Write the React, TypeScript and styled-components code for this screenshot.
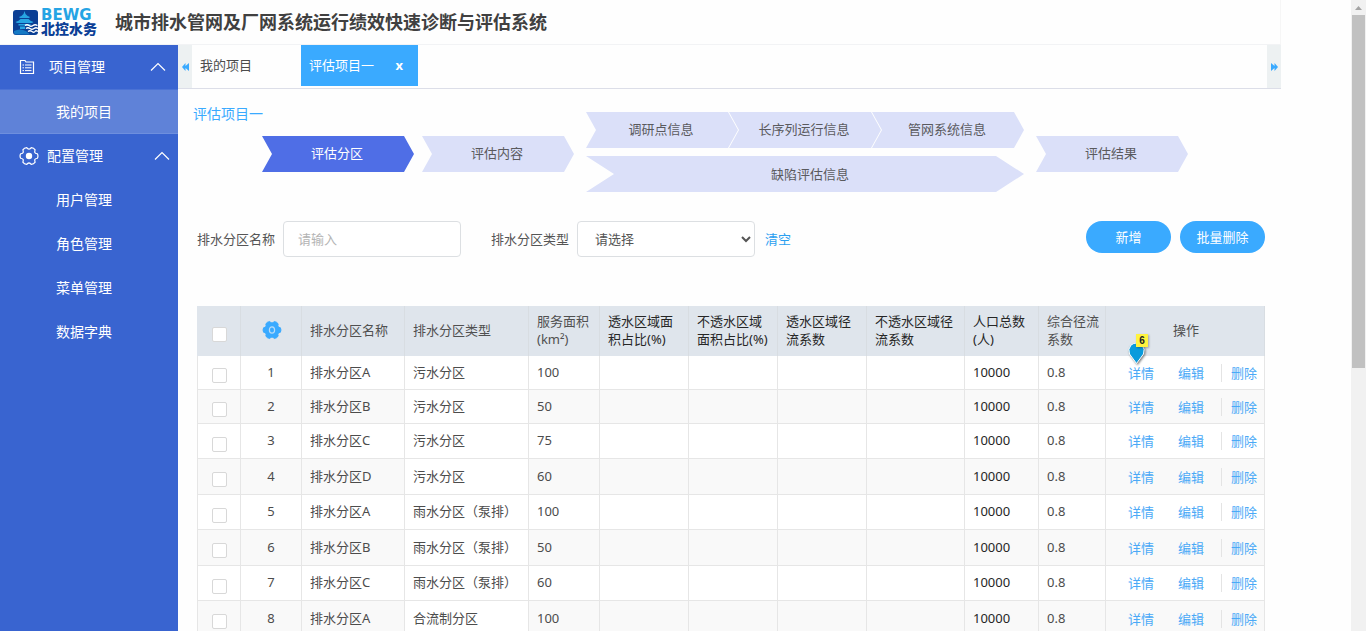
import React from "react";
import styled, { createGlobalStyle, css } from "styled-components";

const BLUE = "#3aaaff";
const FONT = `"Noto Sans", "Noto Sans CJK SC", sans-serif`;

const GlobalStyle = createGlobalStyle`
  *, *::before, *::after { box-sizing: border-box; }
  body {
    margin: 0;
    background: #fefefe;
    color: #4c4c4c;
    font: 13px/18px ${FONT};
    overflow: hidden;
  }
  button, input, select { font: inherit; color: inherit; }
  button { border: 0; padding: 0; background: none; cursor: pointer; }
  a { text-decoration: none; color: inherit; }
`;

const Page = styled.div`
  display: flex;
  height: 100vh;
`;

const Shell = styled.div`
  flex: 1;
  min-width: 0;
  display: flex;
  flex-direction: column;
  margin-right: 70px;
`;

const Header = styled.header`
  display: flex;
  align-items: center;
  flex: none;
  height: 45px;
  padding-left: 12px;
  border-bottom: 1px solid #f2f3f5;
  border-right: 1px solid #f6f6f6;
`;

const Logo = styled.div`
  display: flex;
  align-items: center;
  gap: 3px;
  width: 103px;
`;

const LogoText = styled.div`
  display: flex;
  flex-direction: column;
`;

const LogoLatin = styled.span`
  font: 700 15px/13px "DejaVu Sans", sans-serif;
  color: #25a4e4;
`;

const LogoHan = styled.span`
  font-size: 14px;
  line-height: 13px;
  font-weight: 900;
  color: #0c3f96;
`;

const Title = styled.h1`
  margin: 0;
  font-size: 18px;
  line-height: 24px;
  font-weight: 700;
  color: #404040;
`;

const Body = styled.div`
  flex: 1;
  min-height: 0;
  display: flex;
`;

const Sidebar = styled.nav`
  flex: none;
  width: 178px;
  background: #3964d0;
  color: #fff;
  font-size: 14px;
`;

const SectionButton = styled.button<{ $gap: number; $end: number }>`
  display: flex;
  align-items: center;
  gap: ${(p) => p.$gap}px;
  width: 100%;
  height: 44px;
  padding: 0 ${(p) => p.$end}px 0 19px;
  svg:last-child { margin-left: auto; }
`;

const SideLink = styled.a<{ $active?: boolean }>`
  display: flex;
  align-items: center;
  height: 44px;
  padding-left: 56px;
  ${(p) =>
    p.$active &&
    css`
      height: 45px;
      background: #5f82d8;
      border-top: 1px solid #4a72d5;
      border-bottom: 1px solid #6e8fde;
    `}
`;

const Main = styled.main`
  flex: 1;
  min-width: 0;
  display: flex;
  flex-direction: column;
`;

const TabBar = styled.div`
  display: flex;
  flex: none;
  height: 44px;
  border-bottom: 1px solid #dcdee8;
`;

const TabScroll = styled.button`
  width: 14px;
  background: #edf1f2;
  display: flex;
  align-items: center;
  justify-content: center;
`;

const TabList = styled.div`
  flex: 1;
  display: flex;
  align-items: flex-start;
`;

const Tab = styled.div<{ $active?: boolean }>`
  display: flex;
  align-items: center;
  justify-content: space-between;
  width: ${(p) => (p.$active ? 117 : 109)}px;
  height: 41px;
  padding: 0 15px 1px 8px;
  ${(p) => p.$active && css`background: ${BLUE}; color: #fff;`}
`;

const CloseTab = styled.button`
  font-weight: 700;
  line-height: 16px;
`;

const Content = styled.div`
  flex: 1;
  min-height: 0;
  overflow: hidden;
  padding: 16px 16px 0 19px;
`;

const Flow = styled.section`
  display: grid;
  grid-template-columns: 65px auto auto auto auto 1fr;
  height: 88px;
`;

const ProjectName = styled.h2`
  margin: 0 0 0 -4px;
  font-size: 14px;
  line-height: 18px;
  font-weight: 400;
  color: ${BLUE};
  white-space: nowrap;
`;

const Step = styled.a<{ $active?: boolean; $wide?: boolean }>`
  display: flex;
  align-items: center;
  justify-content: center;
  width: ${(p) => (p.$wide ? "100%" : "152px")};
  height: 36px;
  padding: ${(p) => (p.$wide ? "0 0 0 10px" : "0 2px 2px 0")};
  --tip: ${(p) => (p.$wide ? 28 : 10)}px;
  clip-path: polygon(
    0 0, calc(100% - var(--tip)) 0, 100% 50%,
    calc(100% - var(--tip)) 100%, 0 100%, var(--tip) 50%
  );
  background: ${(p) => (p.$active ? "#4f6ee6" : "#dbe0f9")};
  color: ${(p) => (p.$active ? "#fff" : "#5a5a5e")};
`;

const StepSlot = styled.div`
  padding-top: 31px;
  margin-right: 8px;
`;

const StepStack = styled.div`
  display: grid;
  align-content: start;
  gap: 8px;
  margin: 7px 12px 0 4px;
`;

const StepRow = styled.div`
  display: flex;
  ${Step} + ${Step} { margin-left: -9px; }
`;

const Filters = styled.form`
  display: flex;
  align-items: flex-start;
  margin-top: 28px;
`;

const Field = styled.label`
  display: flex;
  align-items: center;
  gap: 8px;
  margin-right: 30px;
  color: #555;
`;

const control = css`
  width: 178px;
  height: 36px;
  border: 1px solid #dcdfe2;
  border-radius: 4px;
  background: #fff;
`;

const TextInput = styled.input`
  ${control}
  padding: 0 14px;
  &::placeholder { color: #b4b4b4; opacity: 1; }
`;

const SelectBox = styled.select`
  ${control}
  padding: 0 0 0 13px;
`;

const ClearLink = styled.button`
  height: 36px;
  margin-left: -20px;
  color: #2ba0f0;
`;

const Buttons = styled.div`
  display: flex;
  gap: 9px;
  margin-left: auto;
`;

const PillButton = styled.button`
  width: 85px;
  height: 32px;
  border-radius: 16px;
  background: ${BLUE};
  color: #fff;
`;

const Table = styled.table`
  width: 100%;
  margin-top: 49px;
  table-layout: fixed;
  border-spacing: 0;
`;

const Row = styled.tr`
  height: 36px;
  background: #fff;
  &:nth-child(odd) { height: 35px; }
  &:nth-child(-n + 2) { height: 34px; }
  &:nth-child(even) { background: #f9f9f9; }
`;

const HeadCell = styled.th<{ $dark?: boolean; $center?: boolean }>`
  height: 50px;
  padding: 0 6px 2px 8px;
  background: #dfe5ec;
  border-right: 1px solid #d8dde2;
  font-weight: 400;
  text-align: ${(p) => (p.$center ? "center" : "left")};
  color: ${(p) => (p.$dark ? "#262626" : "#505050")};
  svg { display: block; margin: 0 auto; }
`;

const Cell = styled.td<{ $dark?: boolean; $center?: boolean; $plain?: boolean }>`
  padding: 0 0 2px 8px;
  border-right: 1px solid #e6e6e6;
  border-bottom: 1px solid #e6e6e6;
  text-align: ${(p) => (p.$center ? "center" : "left")};
  ${(p) => p.$center && css`padding-left: 0;`}
  ${(p) => p.$dark && css`color: #262626;`}
  ${(p) => p.$plain && css`background: #fff;`}
  &:first-child { border-left: 1px solid #e6e6e6; }
`;

const Check = styled.input.attrs({ type: "checkbox" })`
  appearance: none;
  display: block;
  width: 15px;
  height: 15px;
  margin: 8px auto 0;
  border: 1px solid #d8d8d8;
  border-radius: 2px;
  background: #fff;
  &:checked { background: ${BLUE}; }
`;

const Actions = styled.div`
  display: flex;
  align-items: center;
  padding: 2px 0 0 14px;
  color: #4aa9f7;
`;

const ActionLink = styled.a`
  position: relative;
  margin-right: 24px;
  & + & { margin-right: 17px; }
`;

const DeleteLink = styled.a`
  padding-left: 9px;
  border-left: 1px solid #e4e4e4;
`;

const Marker = styled.span`
  position: absolute;
  left: 0;
  bottom: 18px;
  width: 20px;
  height: 30px;
  svg { position: absolute; left: 0; bottom: 0; overflow: visible; }
`;

const MarkerCount = styled.b`
  position: absolute;
  left: 8px;
  top: 0;
  width: 12px;
  background: #fff33f;
  color: #222;
  font: 700 10px/13px "Liberation Sans", sans-serif;
  text-align: center;
  box-shadow: 1px 1px 2px rgba(0, 0, 0, 0.3);
`;

const MarkerPin = styled.path`
  fill: #0a9bdc;
  stroke: #fff;
  filter: drop-shadow(1px 1px 1px #777);
`;

const ScrollTrack = styled.div`
  flex: none;
  width: 15px;
  background: #f1f1f1;
  display: flex;
  flex-direction: column;
  align-items: center;
`;

const ScrollThumb = styled.div`
  width: 13px;
  height: 56%;
  flex: none;
  background: #c1c1c1;
  margin-top: 5px;
`;

const Chevron = () => (
  <svg width="16" height="10" viewBox="0 0 16 10" fill="none" stroke="#fff" strokeWidth="1.2">
    <path d="M1 8.500 8 1.500l7 7" />
  </svg>
);

const Arrows = ({ flip }: { flip?: boolean }) => (
  <svg width="7" height="8" viewBox="0 0 7 8" fill={BLUE}>
    <path d={flip ? "M0 0 3.500 3V0L7 4 3.500 8V5L0 8Z" : "M7 0 3.500 3V0L0 4l3.500 4V5L7 8Z"} />
  </svg>
);

/* Outline of a six-lobed gear centred on (c, c). */
function gearPath(c: number, outer: number, inner: number) {
  const at = (r: number, deg: number) => {
    const a = (deg * Math.PI) / 180;
    return `${(c + r * Math.cos(a)).toFixed(2)} ${(c + r * Math.sin(a)).toFixed(2)}`;
  };
  let d = `M${at(inner, -30)}`;
  for (let k = 0; k < 360; k += 60) {
    d += `Q${at(inner + 0.4, k - 20)} ${at(outer - 0.3, k - 15)}`;
    d += `Q${at(outer + 0.5, k)} ${at(outer - 0.3, k + 15)}`;
    d += `Q${at(inner + 0.4, k + 20)} ${at(inner, k + 30)}`;
  }
  return d + "Z";
}

const columns: { width: number; label: string[]; dark?: boolean }[] = [
  { width: 103, label: ["排水分区名称"] },
  { width: 124, label: ["排水分区类型"] },
  { width: 71, label: ["服务面积", "(km²)"] },
  { width: 89, label: ["透水区域面", "积占比(%)"], dark: true },
  { width: 89, label: ["不透水区域", "面积占比(%)"], dark: true },
  { width: 89, label: ["透水区域径", "流系数"], dark: true },
  { width: 98, label: ["不透水区域径", "流系数"], dark: true },
  { width: 74, label: ["人口总数", "(人)"], dark: true },
  { width: 67, label: ["综合径流", "系数"] },
];

const rows: [string, string, number][] = [
  ["排水分区A", "污水分区", 100],
  ["排水分区B", "污水分区", 50],
  ["排水分区C", "污水分区", 75],
  ["排水分区D", "污水分区", 60],
  ["排水分区A", "雨水分区（泵排）", 100],
  ["排水分区B", "雨水分区（泵排）", 50],
  ["排水分区C", "雨水分区（泵排）", 60],
  ["排水分区A", "合流制分区", 100],
];

export default function App() {
  return (
    <Page>
      <GlobalStyle />
      <Shell>
        <Header>
          <Logo>
            <svg width="26" height="26" viewBox="0 0 26 26">
              <rect x="1" y="1" width="25" height="25" rx="3" fill="#0b3f94" />
              <path d="M12.500 2 13.500 5q2 2.500 4.500 3l-1 1H8L7 8q2.500-.5 4.500-3ZM8.500 10h8q1.500 2 5 3l-1.500 1H5l-1.500-1q3.500-1 5-3ZM6.500 15h12v1.500h-12ZM8 17.500h5V20H8Z" fill="#27a5e2" />
              <path d="M2 22q6-3 12 0l4 3.500H3Q1.500 25 2 22Z" fill="#1579c4" />
              <path d="M13 16.500q2-1.500 4 0t4 0 4.500 0M14 19.500q2-1.500 4 0t4 0 4 0M16 22.500q2-1.500 4 0t3 0 3 0" fill="none" stroke="#fff" strokeWidth="1.300" />
            </svg>
            <LogoText>
              <LogoLatin>BEWG</LogoLatin>
              <LogoHan>北控水务</LogoHan>
            </LogoText>
          </Logo>
          <Title>城市排水管网及厂网系统运行绩效快速诊断与评估系统</Title>
        </Header>
        <Body>
          <Sidebar>
            <SectionButton $gap={14} $end={12}>
              <svg width="16" height="16" viewBox="0 0 16 16" fill="none" stroke="#fff" strokeWidth="1.2">
                <path d="M1.500 14.500V1.500h4.500l1 1.500h7.500v11.500Z" />
                <path d="M3.500 6h1.500M6 6h6.500M3.500 8.800h1.500M6 8.800h6.500M3.500 11.600h1.500M6 11.600h6.500" strokeWidth="1" />
              </svg>
              项目管理
              <Chevron />
            </SectionButton>
            <SideLink href="#projects" $active>我的项目</SideLink>
            <SectionButton $gap={8} $end={8}>
              <svg width="20" height="20" viewBox="0 0 20 20">
                <path d={gearPath(10, 9, 6.8)} fill="none" stroke="#fff" strokeWidth="1.2" strokeLinejoin="round" />
                <circle cx="10" cy="10" r="3.200" fill="#fff" />
              </svg>
              配置管理
              <Chevron />
            </SectionButton>
            <SideLink href="#users">用户管理</SideLink>
            <SideLink href="#roles">角色管理</SideLink>
            <SideLink href="#menus">菜单管理</SideLink>
            <SideLink href="#dictionary">数据字典</SideLink>
          </Sidebar>
          <Main>
            <TabBar>
              <TabScroll aria-label="向左"><Arrows /></TabScroll>
              <TabList>
                <Tab>我的项目</Tab>
                <Tab $active>评估项目一<CloseTab>x</CloseTab></Tab>
              </TabList>
              <TabScroll aria-label="向右"><Arrows flip /></TabScroll>
            </TabBar>
            <Content>
              <Flow>
                <ProjectName>评估项目一</ProjectName>
                <StepSlot><Step href="#zones" $active>评估分区</Step></StepSlot>
                <StepSlot><Step href="#content">评估内容</Step></StepSlot>
                <StepStack>
                  <StepRow>
                    <Step href="#survey">调研点信息</Step>
                    <Step href="#series">长序列运行信息</Step>
                    <Step href="#network">管网系统信息</Step>
                  </StepRow>
                  <Step href="#defects" $wide>缺陷评估信息</Step>
                </StepStack>
                <StepSlot><Step href="#result">评估结果</Step></StepSlot>
              </Flow>
              <Filters>
                <Field>排水分区名称<TextInput placeholder="请输入" /></Field>
                <Field>排水分区类型
                  <SelectBox defaultValue=""><option value="">请选择</option></SelectBox>
                </Field>
                <ClearLink type="reset">清空</ClearLink>
                <Buttons>
                  <PillButton type="button">新增</PillButton>
                  <PillButton type="button">批量删除</PillButton>
                </Buttons>
              </Filters>
              <Table>
                <colgroup>
                  <col width="44" />
                  <col width="61" />
                  {columns.map((c, i) => <col key={i} width={c.width} />)}
                  <col width="159" />
                </colgroup>
                <thead>
                  <tr>
                    <HeadCell $center><Check aria-label="全选" /></HeadCell>
                    <HeadCell $center>
                      <svg width="20" height="20" viewBox="0 0 20 20">
                        <path d={gearPath(10, 9, 7)} fill={BLUE} stroke={BLUE} strokeLinejoin="round" />
                        <ellipse cx="10" cy="10" rx="2.600" ry="3.200" fill="none" stroke="#b9dcf8" strokeWidth="1.200" />
                      </svg>
                    </HeadCell>
                    {columns.map((c, i) => (
                      <HeadCell key={i} $dark={c.dark}>
                        {c.label[0]}{c.label[1] && <><br />{c.label[1]}</>}
                      </HeadCell>
                    ))}
                    <HeadCell $center>操作</HeadCell>
                  </tr>
                </thead>
                <tbody>
                  {rows.map(([name, kind, area], i) => (
                    <Row key={i}>
                      <Cell $center><Check aria-label={`${name} ${i + 1}`} /></Cell>
                      <Cell $center>{i + 1}</Cell>
                      <Cell>{name}</Cell>
                      <Cell $plain>{kind}</Cell>
                      <Cell>{area}</Cell>
                      <Cell /><Cell /><Cell /><Cell />
                      <Cell $dark>10000</Cell>
                      <Cell>0.8</Cell>
                      <Cell>
                        <Actions>
                          <ActionLink href="#detail">
                            详情
                            {i === 0 && (
                              <Marker>
                                <svg width="17" height="22" viewBox="0 0 17 22">
                                  <MarkerPin d="M8.500 21.500 1.500 12Q-.5 7 3 3q5.500-4 11 0 3.500 4 1.500 9Z" />
                                </svg>
                                <MarkerCount>6</MarkerCount>
                              </Marker>
                            )}
                          </ActionLink>
                          <ActionLink href="#edit">编辑</ActionLink>
                          <DeleteLink href="#delete">删除</DeleteLink>
                        </Actions>
                      </Cell>
                    </Row>
                  ))}
                </tbody>
              </Table>
            </Content>
          </Main>
        </Body>
      </Shell>
      <ScrollTrack>
        <svg width="15" height="10" viewBox="0 0 15 10"><path d="M4 10 7.500 6 11 10Z" fill="#a3a3a3" /></svg>
        <ScrollThumb />
      </ScrollTrack>
    </Page>
  );
}
